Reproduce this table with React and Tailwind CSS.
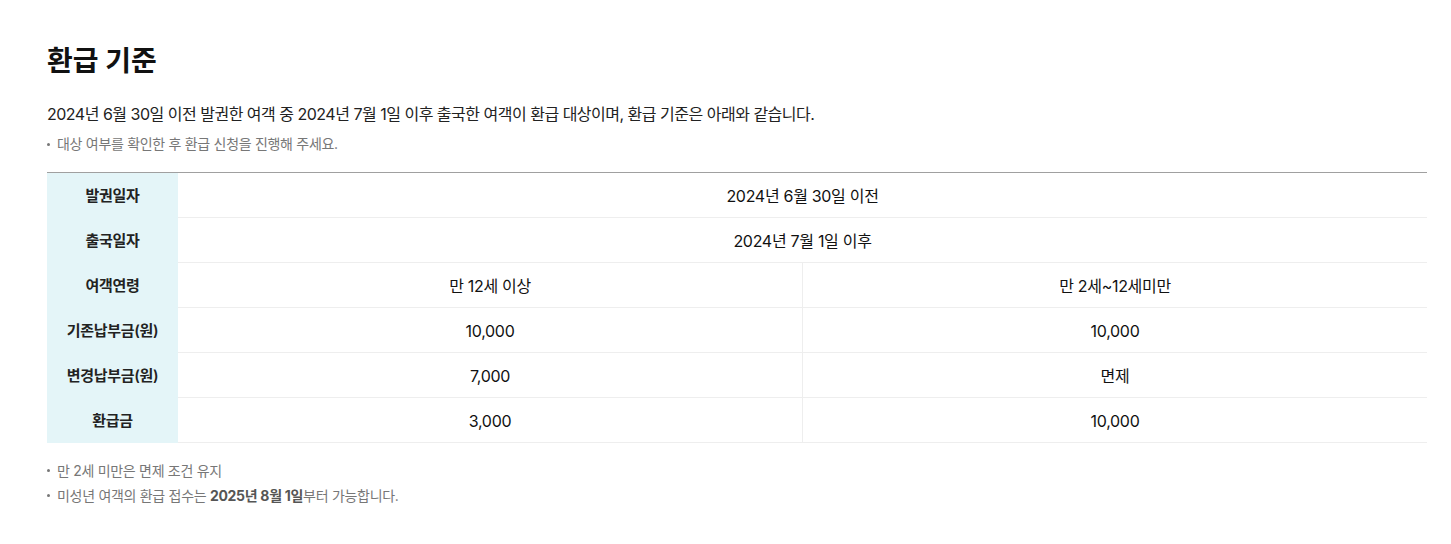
import React from 'react';

const font = { fontFamily: 'Inter, "Noto Sans CJK KR", sans-serif' };

function Row({ label, children }) {
  return (
    <div className="flex h-[45px]">
      <div className="w-[131px] shrink-0 bg-[#e4f5f8] flex items-center justify-center pt-[2px] text-[15px] font-semibold text-[#222] tracking-[-0.3px]">
        {label}
      </div>
      <div className="flex-1 flex border-b border-[#eee]">{children}</div>
    </div>
  );
}

function Cell({ children, border }) {
  return (
    <div className={`flex-1 flex items-center justify-center pt-[2px] text-[16px] text-[#111] tracking-[-0.3px] ${border ? 'border-r border-[#eee]' : ''}`}>
      {children}
    </div>
  );
}

export default function App() {
  return (
    <div className="bg-white w-[1451px] h-[544px] pl-[47px] pr-[24px] pt-[42px]" style={font}>
      <h2 className="text-[28px] font-bold text-[#111] leading-[38px]">환급 기준</h2>
      <p className="mt-[22px] text-[16px] text-[#222] leading-[24px] tracking-[-0.5px]">
        2024년 6월 30일 이전 발권한 여객 중 2024년 7월 1일 이후 출국한 여객이 환급 대상이며, 환급 기준은 아래와 같습니다.
      </p>
      <p className="mt-[8px] text-[14px] text-[#777] leading-[20px] tracking-[-0.3px] flex items-center">
        <span className="w-[3px] h-[3px] rounded-full bg-[#777] mr-[7px]" />
        대상 여부를 확인한 후 환급 신청을 진행해 주세요.
      </p>

      <div className="mt-[18px] border-t border-[#a0a0a0]">
        <Row label="발권일자">
          <Cell>2024년 6월 30일 이전</Cell>
        </Row>
        <Row label="출국일자">
          <Cell>2024년 7월 1일 이후</Cell>
        </Row>
        <Row label="여객연령">
          <Cell border>만 12세 이상</Cell>
          <Cell>만 2세~12세미만</Cell>
        </Row>
        <Row label="기존납부금(원)">
          <Cell border>10,000</Cell>
          <Cell>10,000</Cell>
        </Row>
        <Row label="변경납부금(원)">
          <Cell border>7,000</Cell>
          <Cell>면제</Cell>
        </Row>
        <Row label="환급금">
          <Cell border>3,000</Cell>
          <Cell>10,000</Cell>
        </Row>
      </div>

      <ul className="mt-[15px] text-[14px] text-[#777] leading-[25px] tracking-[-0.3px]">
        <li className="flex items-center">
          <span className="w-[3px] h-[3px] rounded-full bg-[#777] mr-[7px]" />
          만 2세 미만은 면제 조건 유지
        </li>
        <li className="flex items-center">
          <span className="w-[3px] h-[3px] rounded-full bg-[#777] mr-[7px]" />
          미성년 여객의 환급 접수는&nbsp;<b className="font-bold text-[#555]">2025년 8월 1일</b>부터 가능합니다.
        </li>
      </ul>
    </div>
  );
}
